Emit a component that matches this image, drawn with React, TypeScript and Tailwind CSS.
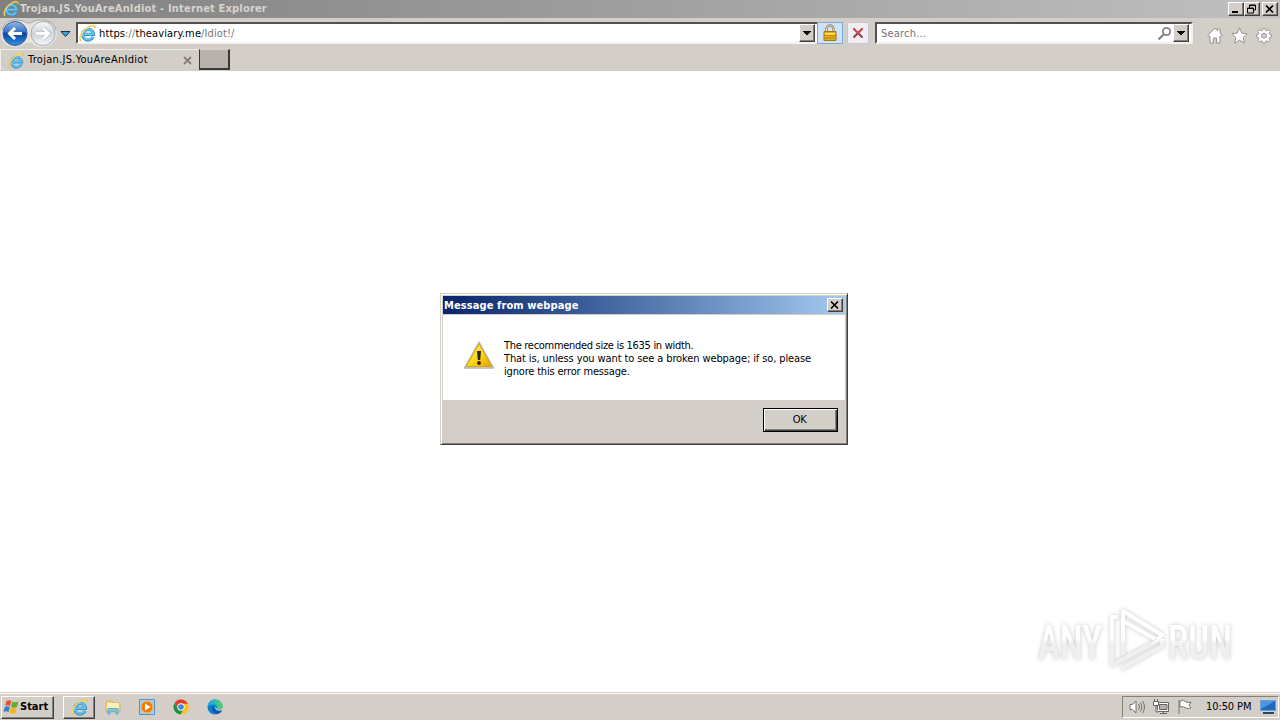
import type { ReactNode } from 'react'

const RAISED = 'border border-t-white border-l-white border-r-[#404040] border-b-[#404040] bg-[#d4cec8] shadow-[inset_-1px_-1px_0_#858079]'

function IeLogo({ size = 16 }: { size?: number }) {
  return (
    <svg width={size} height={size} viewBox="0 0 16 16" fill="none" className="shrink-0">
      <path d="M13.200 11.200A5 5 0 1 1 13.600 8.900H5" stroke="#3a94d2" strokeWidth="3" />
      <path d="M12.900 11A4.900 4.900 0 1 1 13.400 8.600H5" stroke="#66c4f0" strokeWidth="1.700" />
      <path d="M2.200 15C0 13.600 1 9.500 4 6C7.300 2.100 12.600-.3 14.600 1c.6.5.6 1.300.3 2.200" stroke="#ecc02c" strokeWidth="1.300" />
      <path d="M1.600 13.500C1 11.500 2.500 8 5 5.200C8 2 12 .3 14 1" stroke="#ffe978" strokeWidth=".8" />
    </svg>
  )
}

function DropButton() {
  return (
    <div className={`flex h-[18px] w-4 shrink-0 items-center justify-center ${RAISED}`}>
      <svg width="8" height="5" viewBox="0 0 8 5" shapeRendering="crispEdges">
        <path d="M0 0h8L4 4.5Z" fill="#000" />
      </svg>
    </div>
  )
}

function CaptionButton({ children, className = '' }: { children: ReactNode; className?: string }) {
  return (
    <button className={`flex h-[14px] w-4 items-center justify-center ${RAISED} ${className}`}>
      <svg width="12" height="11" viewBox="0 0 12 11" fill="none" stroke="#000" className="shrink-0">
        {children}
      </svg>
    </button>
  )
}

const closeGlyph = <path d="m2 1.500 7 7M9 1.500l-7 7" strokeWidth="1.700" />

function TitleBar() {
  return (
    <header className="flex h-[18px] items-center bg-linear-to-r from-[#808080] to-[#c0c0c0] pr-[2px] pl-[3px]">
      <IeLogo />
      <span className="ml-[1px] text-[11px] leading-[18px] font-bold tracking-[0.18px] text-[#d8d3cd]">
        Trojan.JS.YouAreAnIdiot - Internet Explorer
      </span>
      <div className="ml-auto flex">
        <CaptionButton>
          <path d="M2 8h6" strokeWidth="2" />
        </CaptionButton>
        <CaptionButton>
          <path d="M3.500 4V1h6v5H7M3.500 1.500h6" />
          <path d="M1.500 4h6v5h-6ZM1 4.500h7" />
        </CaptionButton>
        <CaptionButton className="ml-[2px]">{closeGlyph}</CaptionButton>
      </div>
    </header>
  )
}

function NavButtons() {
  return (
    <svg width="76" height="31" viewBox="0 0 76 31" className="shrink-0">
      <defs>
        <linearGradient id="back" x2="0" y2="1">
          <stop stopColor="#93bae8" />
          <stop offset=".43" stopColor="#3873c3" />
          <stop offset=".5" stopColor="#0b429b" />
          <stop offset="1" stopColor="#3096e8" />
        </linearGradient>
        <linearGradient id="forward" x2="0" y2="1">
          <stop stopColor="#f8f9fa" />
          <stop offset=".5" stopColor="#cfd4db" />
          <stop offset="1" stopColor="#f4f7fa" />
        </linearGradient>
      </defs>
      <path d="M15 2C7 2 1 8 1 16c0 7 6 13 14 13 5 0 9-2 11-4h6c3 3 7 5 12 4 8-1 13-7 13-14C56 6 47 1 38 2c-5 1-6 3-9 3s-6-3-14-3Z" fill="#e6e3e0" />
      <path d="M2 12C4 6 8 2 15 2c8 0 11 3 14 3s4-2 9-3c9-1 17 3 18 10" fill="none" stroke="#aaa5a0" />
      <circle cx="15" cy="15.500" r="12" fill="url(#back)" stroke="#3562a0" />
      <path d="M22 15.500H9.500m5.500-5.500-5.500 5.500 5.500 5.500" fill="none" stroke="#fff" strokeWidth="3" />
      <circle cx="43" cy="15.500" r="12" fill="url(#forward)" stroke="#a5adb9" />
      <path d="M36 15.500h12.500m-5.500-5.500 5.500 5.500-5.500 5.500" fill="none" stroke="#b5bbc2" strokeWidth="4.200" />
      <path d="M36 15.500h12.500m-5.500-5.500 5.500 5.500-5.500 5.500" fill="none" stroke="#fff" strokeWidth="2.800" />
      <path d="M61 13.500h9l-4.500 5Z" fill="#3fa1df" stroke="#16345b" />
    </svg>
  )
}

function LockIcon() {
  return (
    <svg width="16" height="18" viewBox="0 0 16 18" fill="none">
      <path d="M4.500 9V5a3.500 3.500 0 0 1 7 0v4" stroke="#8f8762" strokeWidth="2.400" />
      <path d="M4.500 9V5a3.500 3.500 0 0 1 7 0v4" stroke="#ddd39f" />
      <path d="M2 7.500h12v9H2Z" fill="#e5ae17" stroke="#a37816" />
      <path d="M3 9h10v2H3Z" fill="#ffdc58" />
      <path d="M2 11.500h12M2 14h12" stroke="#b8860f" />
    </svg>
  )
}

function Toolbar() {
  return (
    <div className="flex h-[31px] items-center">
      <NavButtons />
      <div className="mb-px flex h-[22px] w-[741px] items-center border-t-2 border-b-2 border-l-2 border-t-[#55514d] border-b-[#f5f2ef] border-l-[#55514d] bg-white pr-[2px] pl-px">
        <IeLogo size={17} />
        <span className="mt-[2px] ml-[3px] text-[11px] tracking-[0.12px] text-[#777]">
          <span className="text-black">https</span>://<span className="text-black">theaviary.me</span>/Idiot!/
        </span>
        <div className="ml-auto">
          <DropButton />
        </div>
      </div>
      <div className="mb-px flex h-[22px] w-[26px] items-center justify-center border border-[#7aaad9] bg-[#cfe2f8]">
        <LockIcon />
      </div>
      <div className="mb-px ml-1 flex h-[22px] w-[22px] items-center justify-center rounded-[2px] border border-[#c5c7d0] bg-[#eeeef3]">
        <svg width="12" height="12" viewBox="0 0 12 12" fill="none">
          <path d="m1.500 1.500 9 9m0-9-9 9" stroke="#923c46" strokeWidth="2" />
          <path d="m1.500 1.500 4.500 4.500 4.500-4.500" stroke="#e15059" strokeWidth="1.500" />
        </svg>
      </div>
      <div className="mb-px ml-[6px] flex h-[22px] w-[318px] items-center border-2 border-t-[#55514d] border-r-[#f3f0ed] border-b-[#f3f0ed] border-l-[#55514d] bg-white pr-[2px] pl-[4px]">
        <span className="mt-[2px] text-[11px] tracking-[0.2px] text-[#747474]">Search...</span>
        <svg width="15" height="15" viewBox="0 0 15 15" fill="none" className="ml-auto">
          <circle cx="9.500" cy="5.500" r="3.700" stroke="#838383" strokeWidth="1.800" />
          <path d="m6.500 8.500-5 5" stroke="#838383" strokeWidth="2.300" />
        </svg>
        <div className="ml-px">
          <DropButton />
        </div>
      </div>
      <div className="mt-[3px] ml-[14px] flex items-center gap-2">
        <svg width="16" height="17" viewBox="0 0 16 17" fill="#fff" stroke="#96928e">
          <path d="m.8 8.200 7.200-7 2.500 2.400V2h2.600v4.200l2.200 2-1.500 1.400-.8-.7V16H9.600v-5H6.400v5H3V8.900l-.8.700Z" />
        </svg>
        <svg width="17" height="17" viewBox="0 0 17 17" fill="#fff" stroke="#96928e">
          <path d="m8.500.9 2.300 5.200 5.400.6-4 3.800 1.200 5.600-4.900-2.900-4.900 2.900 1.200-5.600-4-3.800 5.400-.6Z" />
        </svg>
        <svg width="16" height="17" viewBox="0 0 17 17" fill="#fff" stroke="#96928e">
          <path d="M7.200 1h2.600l.5 2 1.300.5 1.800-1.100 1.700 1.700-1.100 1.900.6 1.200 1.900.5v2.200l-2 .5-.5 1.300 1.100 1.800-1.700 1.700-1.800-1.100-1.300.5-.5 2H7.200l-.5-2-1.300-.5-1.800 1.100-1.700-1.700L3 11.700l-.5-1.300-2-.5V7.700l2-.5L3 6 1.900 4.100l1.700-1.700 1.800 1.100L6.700 3Z" />
          <circle cx="8.500" cy="8.700" r="2.600" fill="#d4cec8" />
        </svg>
      </div>
    </div>
  )
}

function TabRow() {
  return (
    <div className="flex h-[22px] items-start">
      <div className="flex h-[22px] w-[198px] items-center border-t border-l border-[#f2efeb] pl-[7px]">
        <IeLogo />
        <span className="ml-[4px] text-[11px] tracking-[0.28px]">Trojan.JS.YouAreAnIdiot</span>
        <svg width="9" height="9" viewBox="0 0 9 9" className="mr-[6px] ml-auto">
          <path d="m1 1 7 7m0-7L1 8" stroke="#827d79" strokeWidth="1.800" />
        </svg>
      </div>
      <div className="ml-px h-[21px] w-[31px] border-r-2 border-b-2 border-l border-t border-t-[#d4cec8] border-r-[#393633] border-b-[#393633] border-l-[#393633] bg-[#b9b1ad]" />
    </div>
  )
}

function MessageDialog() {
  return (
    <section className="flex h-[152px] w-[408px] flex-col border border-t-[#d4cec8] border-r-[#404040] border-b-[#404040] border-l-[#d4cec8] bg-[#d4cec8] p-[2px] shadow-[inset_1px_1px_0_#fff,inset_-1px_-1px_0_#858079]">
      <div className="flex h-[18px] shrink-0 items-center bg-linear-to-r from-[#0a246a] to-[#a6caf0] pr-[2px] pl-px">
        <h1 className="pt-px text-[11px] leading-[18px] font-bold tracking-[0.1px] text-white">Message from webpage</h1>
        <CaptionButton className="ml-auto">{closeGlyph}</CaptionButton>
      </div>
      <div className="mt-px flex h-[85px] shrink-0 bg-white pt-[23px] pl-[20px]">
        <svg width="33" height="32" viewBox="0 0 33 32" className="mt-px shrink-0">
          <defs>
            <linearGradient id="warn" x2="1" y2="1">
              <stop stopColor="#fff36b" />
              <stop offset=".5" stopColor="#ffd817" />
              <stop offset="1" stopColor="#e99c00" />
            </linearGradient>
          </defs>
          <path d="M16 3 30.500 29H1.500Z" fill="#e4e4e4" stroke="#b4b4b4" strokeLinejoin="round" strokeWidth="1.300" />
          <path d="M16 5 28.800 27.500H3.200Z" fill="url(#warn)" stroke="#dba60a" />
          <path d="M14 12h4l-.8 9h-2.400Z" fill="#292719" />
          <circle cx="16" cy="24" r="1.900" fill="#292719" />
        </svg>
        <p className="mt-px ml-[8px] text-[11px] leading-[13px] whitespace-nowrap">
          <span className="block tracking-[-0.3px]">The recommended size is 1635 in width.</span>
          <span className="block tracking-[-0.11px]">That is, unless you want to see a broken webpage; if so, please</span>
          <span className="block tracking-[-0.18px]">ignore this error message.</span>
        </p>
      </div>
      <div className="flex justify-end pt-2 pr-[7px]">
        <button className="h-6 w-[75px] border border-black bg-[#d4cec8] pr-[2px] text-[11px] tracking-[-0.3px] shadow-[inset_1px_1px_0_#fff,inset_-1px_-1px_0_#404040,inset_-2px_-2px_0_#858079]">
          <span className="block pt-px">OK</span>
        </button>
      </div>
    </section>
  )
}

function Watermark() {
  return (
    <svg width="220" height="80" viewBox="0 0 220 80" className="overflow-visible drop-shadow-[0_0_2px_rgba(0,0,0,0.22)]">
      <defs>
        <linearGradient id="mark" gradientUnits="userSpaceOnUse" x1="0" y1="0" x2="0" y2="80">
          <stop offset=".49" stopColor="#fff" />
          <stop offset=".54" stopColor="#f0f0f0" />
        </linearGradient>
      </defs>
      <g fill="url(#mark)" fontFamily="Roboto" fontSize="48" fontWeight="500">
        <text x="8" y="59" textLength="64" lengthAdjust="spacingAndGlyphs">ANY</text>
        <text x="138" y="59" textLength="64" lengthAdjust="spacingAndGlyphs">RUN</text>
      </g>
      <g fill="none" stroke="url(#mark)" strokeWidth="4" strokeLinejoin="round">
        <path d="M88 17h-6v48l47-25" />
        <path d="M125 39 93 21v34" />
        <path d="M93 22V11l39 24-5 5M91 69l41-23v-7" />
      </g>
    </svg>
  )
}

function Taskbar() {
  return (
    <footer className="flex h-7 items-center border-t border-[#d4cec8] bg-[#d4cec8] pt-px shadow-[inset_0_1px_0_#fff]">
      <button className={`ml-px flex h-[23px] w-[53px] items-center pl-px ${RAISED}`}>
        <svg width="17" height="16" viewBox="0 0 16 16" className="shrink-0">
          <path d="M3 2c2-1 3-1 5 0L6.600 7c-2-1-3-1-5 0Z" fill="#e6532b" />
          <path d="M9 2.500c2 1 4 1 6 0L13.500 8c-2 1-4 1-6 0Z" fill="#65ad35" />
          <path d="M1.300 8c2-1 3-1 5 0L5 13c-2-1-3-1-5 0Z" fill="#397ec6" />
          <path d="M7.300 8.600c2 1 4 1 6 0L12 14c-2 1-4 1-6 0Z" fill="#f7b51c" />
        </svg>
        <span className="pt-px text-[11px] font-bold">Start</span>
      </button>
      <div className={`ml-[9px] flex h-[23px] w-8 items-center justify-center ${RAISED}`}>
        <IeLogo size={17} />
      </div>
      <div className="ml-[10px] flex items-center gap-[18px]">
        <svg width="16" height="16" viewBox="0 0 16 16">
          <path d="M1 2h6l1 2h7v9H1Z" fill="#e9d386" stroke="#d0b46a" />
          <path d="M2 4h12v6H2Z" fill="#fff1b4" />
          <path d="M3 15V9.500h10V15h-2v-3H5v3Z" fill="#8dcae7" stroke="#58a9cf" />
        </svg>
        <svg width="16" height="16" viewBox="0 0 16 16">
          <path d="M.5.500h15v15H.5Z" fill="#a8cdeb" stroke="#5794c4" />
          <circle cx="8" cy="8" r="6" fill="#f07c0d" stroke="#f9ba67" />
          <path d="m6 4.500 5.500 3.500L6 11.500Z" fill="#fff" />
        </svg>
        <svg width="16" height="16" viewBox="0 0 16 16">
          <circle cx="8" cy="8" r="7.500" fill="#fbc116" />
          <path d="M8 8 15 5.300A7.500 7.500 0 0 0 1.500 4.200L5 10Z" fill="#e33b2e" />
          <path d="M1.500 4.200A7.500 7.500 0 0 0 7.600 15.500L11 10H5Z" fill="#189447" />
          <path d="M8 4.700h6.800A7.500 7.500 0 0 1 7.600 15.500L11 10Z" fill="#fbc116" />
          <circle cx="8" cy="8" r="3.700" fill="#fff" />
          <circle cx="8" cy="8" r="2.800" fill="#4285df" />
        </svg>
        <svg width="17" height="16" viewBox="0 0 17 16">
          <defs>
            <linearGradient id="edge">
              <stop stopColor="#15a7df" />
              <stop offset="1" stopColor="#56cf72" />
            </linearGradient>
          </defs>
          <circle cx="8" cy="8" r="7.500" fill="#087bcc" />
          <path d="M.5 8C1 3 4 .5 8 .5c5 0 8 3.500 8 6.500 0 4-5 4-6.300 3 1.200-3-1-4.500-3.700-4.500C3 5.500 1 7 .5 8Z" fill="url(#edge)" />
          <path d="M6 7c-2 4 1 8 5 7.700 2-.3 3.500-2 4-3-4 1.500-7 .5-8-2.500Z" fill="#09559f" />
          <path d="M8.500 7.500c-1 3 2 5 6 3.500h2V8c-1 2.300-5 3-6.500 2Z" fill="#d4cec8" />
        </svg>
      </div>
      <div className="mr-px ml-auto flex h-[22px] w-[157px] items-center border border-t-[#858079] border-r-white border-b-white border-l-[#858079] pl-[6px]">
        <svg width="17" height="16" viewBox="0 0 17 16" fill="#fff" stroke="#75716d">
          <path d="M1 5.500h2.500L7 2v12l-3.500-3.500H1Z" />
          <path d="M9.500 5q2 3 0 6M11.500 3.500q3 4.500 0 9M13.500 2q4 6 0 12" fill="none" />
        </svg>
        <svg width="16" height="16" viewBox="0 0 16 16" fill="#fff" stroke="#69645f" className="ml-[7px]">
          <path d="M4.500 3.500h11v9h-11ZM7 14.500h7M10.500 12v2" />
          <path d="M6.500 5.500H14v5H6.500Z" fill="#b4b0ac" />
          <path d="M.5 2.500h5v4h-5ZM1.500 0v3m3-3v3M3 7v6h2" />
        </svg>
        <svg width="16" height="16" viewBox="0 0 16 16" fill="#fff" stroke="#77736f" className="ml-[8px]">
          <path d="M2 1v14M3 2q4-2 6 1 2 1 5 0l-2 3.500 2 2.500q-3 1-5 0-2-2-6-1Z" />
        </svg>
        <span className="mt-px ml-[13px] text-[11px] tracking-[-0.1px] whitespace-nowrap">10:50 PM</span>
        <svg width="16" height="14" viewBox="0 0 16 14" className="mr-[2px] ml-auto">
          <path d="M.5.500h15v10H.5Z" fill="#1e69bd" stroke="#65a1d8" />
          <path d="M1 1h14L1 9Z" fill="#4e96de" />
          <path d="M3 12h11v2H3Z" fill="#294667" />
        </svg>
      </div>
    </footer>
  )
}

export default function App() {
  return (
    <div className="flex h-screen w-screen flex-col overflow-hidden bg-[#d4cec8] font-['DejaVu_Sans_Condensed','DejaVu_Sans',sans-serif] font-stretch-condensed text-black">
      <TitleBar />
      <Toolbar />
      <TabRow />
      <main className="relative flex-1 bg-white pt-[222px] pl-[440px]">
        <MessageDialog />
        {/* watermark floats over the page */}
        <div className="absolute right-[30px] bottom-[12px]">
          <Watermark />
        </div>
      </main>
      <Taskbar />
    </div>
  )
}
